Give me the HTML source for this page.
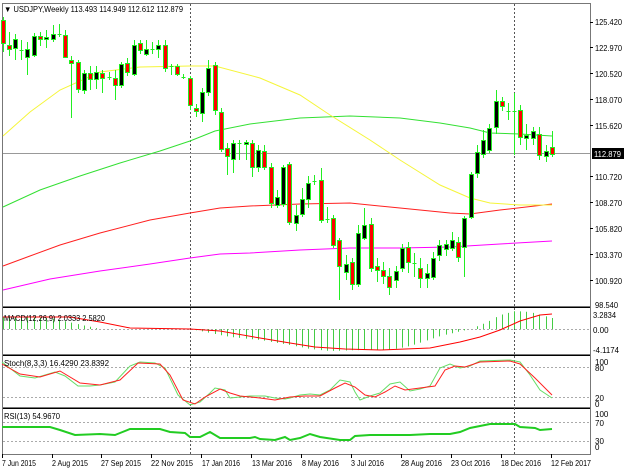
<!DOCTYPE html>
<html><head><meta charset="utf-8"><style>
html,body{margin:0;padding:0;background:#fff;width:629px;height:470px;overflow:hidden}
svg{display:block}
text{font-family:"Liberation Sans",sans-serif;font-size:8px;fill:#000}
</style></head><body>
<svg id="s" width="629" height="470" viewBox="0 0 629 470" xmlns="http://www.w3.org/2000/svg">
<rect width="629" height="470" fill="#fff"/>
<g fill="none" stroke="#777" stroke-width="1">
<rect x="2.5" y="3.5" width="588" height="303"/>
</g>
<line x1="2" y1="307.5" x2="591" y2="307.5" stroke="#000"/>
<line x1="2" y1="355.5" x2="591" y2="355.5" stroke="#000"/>
<line x1="2" y1="408.5" x2="591" y2="408.5" stroke="#000"/>
<line x1="2.5" y1="3" x2="2.5" y2="454" stroke="#777"/>
<line x1="590.5" y1="3" x2="590.5" y2="454" stroke="#777"/>
<line x1="2" y1="454.5" x2="591" y2="454.5" stroke="#777"/>
<line x1="2" y1="354.5" x2="591" y2="354.5" stroke="#777"/>
<line x1="2" y1="407.5" x2="591" y2="407.5" stroke="#777"/>
<g stroke="#555" stroke-dasharray="2,2">
<line x1="190.5" y1="4" x2="190.5" y2="454"/>
<line x1="514.5" y1="4" x2="514.5" y2="454"/>
</g>
<g stroke="#aaa" stroke-dasharray="2,2">
<line x1="3" y1="329.5" x2="590" y2="329.5"/>
<line x1="3" y1="367.5" x2="590" y2="367.5"/>
<line x1="3" y1="397.5" x2="590" y2="397.5"/>
<line x1="3" y1="422.5" x2="590" y2="422.5"/>
<line x1="3" y1="441.5" x2="590" y2="441.5"/>
</g>
<line x1="3" y1="153.5" x2="590" y2="153.5" stroke="#999"/>
<g fill="none" stroke-width="1">
<polyline stroke="#ff00ff" points="3,290 50,279 100,271 150,264 190,258 220,254 250,253 300,250 350,248 400,248 450,247 500,244 552,241"/>
<polyline stroke="#ff2020" points="3,266 30,256 60,245 100,233 150,220 190,213 220,208 250,206 300,204 350,203 400,208 450,213 470,214 500,210 552,204"/>
<polyline stroke="#33e033" points="3,207 40,190 80,176 120,163 160,151 190,141 215,131 250,124 300,118 350,116 400,118 440,123 470,128 490,133 520,134 552,136"/>
<polyline stroke="#f5f53a" points="3,136 30,112 60,90 100,72 140,67 190,66 215,66 260,78 300,95 330,115 370,140 400,160 440,185 470,198 490,203 520,205 552,205"/>
</g>
<g id="candles"></g>
<g id="macd"></g>
<polyline fill="none" stroke="#ff0000" points="3,317 70,317 100,322 130,328 190,329 220,331 260,338 290,343 315,347 345,349 380,350 430,348 460,342 480,337 500,330 520,321 540,315 552,314"/>
<polyline fill="none" stroke="#66dd66" points="2,362 20,376 35,378 55,372 65,376 78,386 90,386 100,385 115,382 130,366 140,362 155,363 165,368 178,395 190,405 200,402 210,393 215,388 225,390 230,398 240,397 250,396 265,396 275,398 285,399 290,398 300,395 310,394 320,395 330,390 340,380 350,382 355,392 360,400 370,396 380,393 390,384 400,382 410,391 420,389 430,386 440,368 450,364 460,368 470,366 480,361 510,360 520,362 530,375 540,390 552,398"/>
<polyline fill="none" stroke="#ff2020" points="2,364 20,374 40,377 60,371 80,383 100,385 120,380 138,363 160,364 170,375 183,400 195,404 205,397 220,389 230,393 240,396 260,398 275,400 290,397 305,396 320,396 335,388 345,383 355,387 365,395 375,397 385,392 395,386 405,390 420,388 435,386 445,370 455,366 465,367 480,362 510,361 520,364 535,378 552,395"/>
<polyline fill="none" stroke="#22cc22" stroke-width="2" points="2,427 50,427 60,430 75,435 100,434 115,435 120,433 130,429 160,429 170,432 185,433 190,437 200,437 210,432 220,438 240,438 250,438 255,437 260,439 275,440 285,437 290,440 300,438 310,434 320,437 340,440 350,440 355,436 370,435 390,435 410,435 430,434 450,434 460,432 470,428 490,424 515,424 520,427 535,428 540,430 552,429"/>
<text x="4" y="12" textLength="179" lengthAdjust="spacingAndGlyphs">▼ USDJPY,Weekly  113.493 114.949 112.612 112.879</text>
<text x="4" y="321" textLength="101" lengthAdjust="spacingAndGlyphs">MACD(12,26,9) 2.0333 2.5820</text>
<text x="4" y="366" textLength="105" lengthAdjust="spacingAndGlyphs">Stoch(8,3,3) 16.4290 23.8392</text>
<text x="4" y="419" textLength="56" lengthAdjust="spacingAndGlyphs">RSI(13) 54.9670</text>
<g stroke="#000">
<line x1="590" y1="22.5" x2="593" y2="22.5"/><line x1="590" y1="47.5" x2="593" y2="47.5"/><line x1="590" y1="73.5" x2="593" y2="73.5"/><line x1="590" y1="99.5" x2="593" y2="99.5"/><line x1="590" y1="125.5" x2="593" y2="125.5"/><line x1="590" y1="176.5" x2="593" y2="176.5"/><line x1="590" y1="202.5" x2="593" y2="202.5"/><line x1="590" y1="228.5" x2="593" y2="228.5"/><line x1="590" y1="254.5" x2="593" y2="254.5"/><line x1="590" y1="280.5" x2="593" y2="280.5"/>
</g>
<g>
<text x="595" y="25" textLength="27" lengthAdjust="spacingAndGlyphs">125.420</text>
<text x="595" y="51" textLength="27" lengthAdjust="spacingAndGlyphs">122.970</text>
<text x="595" y="77" textLength="27" lengthAdjust="spacingAndGlyphs">120.520</text>
<text x="595" y="103" textLength="27" lengthAdjust="spacingAndGlyphs">118.070</text>
<text x="595" y="129" textLength="27" lengthAdjust="spacingAndGlyphs">115.620</text>
<rect x="592" y="148" width="32" height="11" fill="#000"/>
<text x="594" y="157" style="fill:#fff" textLength="27" lengthAdjust="spacingAndGlyphs">112.879</text>
<text x="595" y="180" textLength="27" lengthAdjust="spacingAndGlyphs">110.720</text>
<text x="595" y="206" textLength="27" lengthAdjust="spacingAndGlyphs">108.270</text>
<text x="595" y="232" textLength="27" lengthAdjust="spacingAndGlyphs">105.820</text>
<text x="595" y="258" textLength="27" lengthAdjust="spacingAndGlyphs">103.370</text>
<text x="595" y="284" textLength="27" lengthAdjust="spacingAndGlyphs">100.920</text>
<text x="595" y="308" textLength="23" lengthAdjust="spacingAndGlyphs">98.540</text>
<text x="593" y="318" textLength="23" lengthAdjust="spacingAndGlyphs">3.2834</text>
<text x="593" y="333">0.00</text>
<text x="593" y="353" textLength="26" lengthAdjust="spacingAndGlyphs">-4.1174</text>
<text x="595" y="365">100</text>
<text x="595" y="371">80</text>
<text x="595" y="401">20</text>
<text x="595" y="407">0</text>
<text x="595" y="417">100</text>
<text x="595" y="426">70</text>
<text x="595" y="444">30</text>
<text x="595" y="450">0</text>
</g>
<g stroke="#000">
<line x1="2.5" y1="454" x2="2.5" y2="458"/><line x1="52.5" y1="454" x2="52.5" y2="458"/><line x1="101.5" y1="454" x2="101.5" y2="458"/><line x1="151.5" y1="454" x2="151.5" y2="458"/><line x1="201.5" y1="454" x2="201.5" y2="458"/><line x1="251.5" y1="454" x2="251.5" y2="458"/><line x1="301.5" y1="454" x2="301.5" y2="458"/><line x1="351.5" y1="454" x2="351.5" y2="458"/><line x1="401.5" y1="454" x2="401.5" y2="458"/><line x1="451.5" y1="454" x2="451.5" y2="458"/><line x1="501.5" y1="454" x2="501.5" y2="458"/><line x1="551.5" y1="454" x2="551.5" y2="458"/>
</g>
<g>
<text x="2" y="466" textLength="34" lengthAdjust="spacingAndGlyphs">7 Jun 2015</text>
<text x="52" y="466" textLength="36" lengthAdjust="spacingAndGlyphs">2 Aug 2015</text>
<text x="101" y="466" textLength="40" lengthAdjust="spacingAndGlyphs">27 Sep 2015</text>
<text x="151" y="466" textLength="42" lengthAdjust="spacingAndGlyphs">22 Nov 2015</text>
<text x="202" y="466" textLength="38" lengthAdjust="spacingAndGlyphs">17 Jan 2016</text>
<text x="252" y="466" textLength="40" lengthAdjust="spacingAndGlyphs">13 Mar 2016</text>
<text x="302" y="466" textLength="37" lengthAdjust="spacingAndGlyphs">8 May 2016</text>
<text x="351" y="466" textLength="33" lengthAdjust="spacingAndGlyphs">3 Jul 2016</text>
<text x="401" y="466" textLength="41" lengthAdjust="spacingAndGlyphs">28 Aug 2016</text>
<text x="451" y="466" textLength="39" lengthAdjust="spacingAndGlyphs">23 Oct 2016</text>
<text x="501" y="466" textLength="40" lengthAdjust="spacingAndGlyphs">18 Dec 2016</text>
<text x="551" y="466" textLength="40" lengthAdjust="spacingAndGlyphs">12 Feb 2017</text>
</g>
</svg>
<script>
var C=[[3,20,43,17,52,'r'],[9,45,49,32,56,'r'],[15,39,48,34,60,'b'],[21,50,50,40,60,'d'],[27,49,57,42,75,'b'],[34,36,55,33,57,'b'],[40,36,39,32,46,'r'],[46,37,39,30,48,'b'],[53,34,39,25,42,'b'],[59,34,34,24,37,'d'],[65,35,57,30,58,'r'],[71,60,63,56,118,'r'],[78,62,89,60,93,'r'],[84,73,90,70,94,'b'],[90,73,79,66,90,'r'],[96,72,79,66,89,'b'],[102,73,78,70,93,'r'],[109,77,77,72,80,'d'],[115,78,85,70,100,'r'],[121,64,85,62,88,'b'],[127,63,72,58,76,'r'],[134,45,74,40,76,'b'],[140,43,50,40,54,'r'],[146,49,54,40,56,'b'],[152,49,49,42,54,'d'],[158,45,49,40,58,'b'],[165,45,68,40,72,'r'],[171,66,66,64,75,'d'],[177,66,74,64,76,'r'],[183,77,77,74,79,'d'],[190,78,105,76,110,'r'],[196,108,111,104,117,'r'],[202,92,113,88,122,'b'],[208,68,92,60,96,'b'],[215,65,110,62,115,'r'],[221,112,149,108,152,'r'],[227,148,156,143,175,'r'],[233,143,159,140,173,'b'],[239,143,143,140,160,'d'],[246,142,144,140,160,'b'],[252,143,167,140,177,'r'],[258,150,167,145,172,'b'],[264,151,167,145,170,'r'],[271,167,203,163,208,'r'],[277,197,205,190,208,'b'],[283,167,204,165,207,'b'],[289,164,222,162,225,'r'],[296,215,223,205,231,'b'],[302,199,214,188,217,'b'],[308,183,199,176,208,'b'],[314,181,181,175,185,'d'],[321,180,220,168,223,'r'],[327,219,219,207,223,'d'],[333,218,245,215,248,'r'],[339,240,266,238,300,'r'],[346,264,272,255,280,'b'],[352,262,284,258,290,'r'],[358,233,284,225,287,'b'],[364,225,238,208,240,'b'],[371,224,268,218,272,'r'],[377,266,270,258,282,'r'],[383,270,276,262,284,'r'],[389,276,287,268,295,'r'],[396,271,280,266,288,'b'],[402,248,268,244,272,'b'],[408,247,262,242,273,'r'],[414,263,263,253,277,'d'],[420,268,278,258,288,'r'],[427,273,278,264,288,'b'],[433,258,277,252,280,'b'],[439,245,255,240,261,'b'],[446,244,249,240,256,'b'],[452,240,248,232,251,'b'],[458,242,257,237,262,'r'],[464,218,247,216,277,'b'],[471,174,217,172,219,'b'],[477,152,173,145,178,'b'],[483,140,154,130,158,'b'],[489,128,150,124,153,'b'],[496,101,127,90,134,'b'],[502,101,106,97,111,'r'],[508,111,111,103,120,'d'],[514,111,111,93,155,'d'],[520,110,137,105,145,'r'],[526,135,138,124,150,'b'],[533,131,138,127,145,'b'],[539,134,155,127,160,'r'],[546,151,156,145,162,'b'],[552,147,154,131,157,'r']];
var g=document.getElementById('candles'),h='';
C.forEach(function(c){var x=c[0]+0.5;h+='<line x1="'+x+'" y1="'+c[3]+'" x2="'+x+'" y2="'+c[4]+'" stroke="#22ee22"/>';
if(c[5]=='d'){h+='<line x1="'+(x-2)+'" y1="'+(c[1]+0.5)+'" x2="'+(x+2)+'" y2="'+(c[1]+0.5)+'" stroke="#22ee22"/>';}
else{h+='<rect x="'+(c[0]-1.5)+'" y="'+(c[1]+0.5)+'" width="4" height="'+Math.max(1,c[2]-c[1])+'" fill="'+(c[5]=='r'?'#ff0000':'#000')+'" stroke="#22ee22"/>';}});
g.innerHTML=h;
var H=[[3,317],[50,318],[100,329],[190,329],[200,331],[230,337],[260,340],[290,345],[310,349],[330,351],[360,350],[390,350],[410,346],[440,336],[470,329],[485,323],[500,315],[515,311],[530,312],[552,318]];
function hv(x){for(var i=1;i<H.length;i++){if(x<=H[i][0]){var a=H[i-1],b=H[i];return a[1]+(b[1]-a[1])*(x-a[0])/(b[0]-a[0]);}}return H[H.length-1][1];}
var m='';C.forEach(function(c){var x=c[0]+0.5,y=hv(c[0]);if(Math.abs(y-329)>0.6)m+='<line x1="'+x+'" y1="329" x2="'+x+'" y2="'+y+'" stroke="#44cc44"/>';});
document.getElementById('macd').innerHTML=m;
</script>
</body></html>
